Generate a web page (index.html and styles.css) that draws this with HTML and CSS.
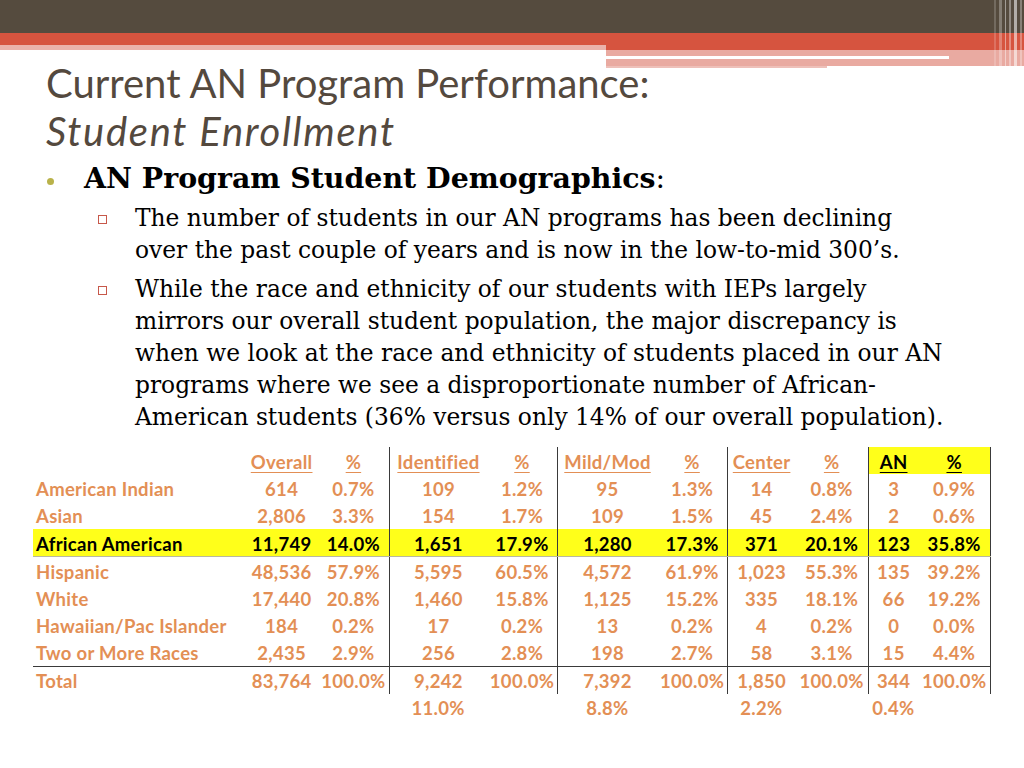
FILE: index.html
```html
<!DOCTYPE html>
<html lang="en">
<head>
<meta charset="utf-8">
<title>Current AN Program Performance</title>
<link rel="stylesheet" href="styles.css">
</head>
<body>
<div class="slide">
  <header class="banner">
    <div class="band-dark"></div>
    <div class="band-red"></div>
    <div class="band-lower">
      <div class="lower-left"></div>
      <div class="lower-right">
        <div class="lr-red"></div>
        <div class="lr-pink">
          <div class="lr-line"></div>
        </div>
        <div class="lr-tail"></div>
      </div>
    </div>
    <div class="stripes">
      <span class="s1"></span><span class="s2"></span><span class="s3"></span><span class="s4"></span><span class="s5"></span><span class="s6"></span>
    </div>
  </header>

  <h1 class="title">Current AN Program Performance:<br><em>Student Enrollment</em></h1>

  <ul class="bullets">
    <li class="lvl1"><strong>AN Program Student Demographics</strong>:
      <ul class="sub">
        <li>The number of students in our AN programs has been declining<br>over the past couple of years and is now in the low-to-mid 300’s.</li>
        <li>While the race and ethnicity of our students with IEPs largely<br>mirrors our overall student population, the major discrepancy is<br>when we look at the race and ethnicity of students placed in our AN<br>programs where we see a disproportionate number of African-<br>American students (36% versus only 14% of our overall population).</li>
      </ul>
    </li>
  </ul>

  <table class="data">
    <colgroup>
      <col class="c-label"><col class="c-a"><col class="c-b"><col class="c-c"><col class="c-d"><col class="c-e"><col class="c-f"><col class="c-g"><col class="c-h"><col class="c-i"><col class="c-j">
    </colgroup>
    <thead>
      <tr>
        <th class="label"></th>
        <th><u>Overall</u></th><th><u>%</u></th>
        <th class="sep"><u>Identified</u></th><th><u>%</u></th>
        <th class="sep"><u>Mild/Mod</u></th><th><u>%</u></th>
        <th class="sep"><u>Center</u></th><th><u>%</u></th>
        <th class="sep an"><u>AN</u></th><th class="an end"><u>%</u></th>
      </tr>
    </thead>
    <tbody>
      <tr><td class="label">American Indian</td><td>614</td><td>0.7%</td><td class="sep">109</td><td>1.2%</td><td class="sep">95</td><td>1.3%</td><td class="sep">14</td><td>0.8%</td><td class="sep">3</td><td class="end">0.9%</td></tr>
      <tr><td class="label">Asian</td><td>2,806</td><td>3.3%</td><td class="sep">154</td><td>1.7%</td><td class="sep">109</td><td>1.5%</td><td class="sep">45</td><td>2.4%</td><td class="sep">2</td><td class="end">0.6%</td></tr>
      <tr class="hl"><td class="label">African American</td><td>11,749</td><td>14.0%</td><td class="sep">1,651</td><td>17.9%</td><td class="sep">1,280</td><td>17.3%</td><td class="sep">371</td><td>20.1%</td><td class="sep">123</td><td class="end">35.8%</td></tr>
      <tr><td class="label">Hispanic</td><td>48,536</td><td>57.9%</td><td class="sep">5,595</td><td>60.5%</td><td class="sep">4,572</td><td>61.9%</td><td class="sep">1,023</td><td>55.3%</td><td class="sep">135</td><td class="end">39.2%</td></tr>
      <tr><td class="label">White</td><td>17,440</td><td>20.8%</td><td class="sep">1,460</td><td>15.8%</td><td class="sep">1,125</td><td>15.2%</td><td class="sep">335</td><td>18.1%</td><td class="sep">66</td><td class="end">19.2%</td></tr>
      <tr><td class="label">Hawaiian/Pac Islander</td><td>184</td><td>0.2%</td><td class="sep">17</td><td>0.2%</td><td class="sep">13</td><td>0.2%</td><td class="sep">4</td><td>0.2%</td><td class="sep">0</td><td class="end">0.0%</td></tr>
      <tr class="last"><td class="label">Two or More Races</td><td>2,435</td><td>2.9%</td><td class="sep">256</td><td>2.8%</td><td class="sep">198</td><td>2.7%</td><td class="sep">58</td><td>3.1%</td><td class="sep">15</td><td class="end">4.4%</td></tr>
      <tr><td class="label">Total</td><td>83,764</td><td>100.0%</td><td class="sep">9,242</td><td>100.0%</td><td class="sep">7,392</td><td>100.0%</td><td class="sep">1,850</td><td>100.0%</td><td class="sep">344</td><td class="end">100.0%</td></tr>
      <tr class="rates"><td class="label"></td><td></td><td></td><td>11.0%</td><td></td><td>8.8%</td><td></td><td>2.2%</td><td></td><td>0.4%</td><td></td></tr>
    </tbody>
  </table>
</div>
</body>
</html>
```

FILE: styles.css
```css
* { box-sizing: border-box; }
html, body { margin: 0; padding: 0; background: #ffffff; }

.slide {
  position: relative;
  width: 1024px;
  height: 768px;
  overflow: hidden;
  background: #ffffff;
}

/* ---------- banner ---------- */
.banner { position: relative; height: 68px; }
.band-dark { height: 33px; background: #554b3e; }
.band-red { height: 12px; background: #d6543f; }
.band-lower { display: flex; height: 23px; }
.lower-left { width: 606px; height: 5px; background: #eab2aa; }
.lower-right { flex: 1; display: flex; flex-direction: column; }
.lr-red { height: 5px; background: #d6543f; }
.lr-pink { height: 16px; background: #e9aaa1; padding-top: 6px; }
.lr-line { width: 343px; height: 3px; background: #ffffff; }
.lr-tail { height: 2px; width: 221px; background: #eec0b9; }

.stripes {
  position: absolute;
  top: 0; right: 0;
  width: 34px; height: 68px;
  display: flex;
  justify-content: flex-end;
  gap: 3px;
  padding-right: 2px;
}
.stripes span { display: block; height: 100%; background: rgba(255,255,255,0.35); }
.stripes .s1 { width: 2px; background: rgba(255,255,255,0.18); }
.stripes .s2 { width: 3px; background: rgba(255,255,255,0.28); }
.stripes .s3 { width: 1px; background: rgba(255,255,255,0.45); }
.stripes .s4 { width: 2px; background: rgba(255,255,255,0.35); }
.stripes .s5 { width: 3px; background: rgba(255,255,255,0.55); }
.stripes .s6 { width: 2px; background: rgba(255,255,255,0.3); }

/* ---------- title ---------- */
.title {
  margin: -9px 0 0 46px;
  font-family: "Lato", "Open Sans", sans-serif;
  font-weight: 400;
  font-size: 40px;
  line-height: 48px;
  color: #54493e;
}
.title em { font-style: italic; letter-spacing: 1.7px; }

/* ---------- bullets ---------- */
.bullets {
  list-style: none;
  margin: 7px 0 0 0;
  padding: 0 0 0 84px;
  font-family: "DejaVu Serif", "Liberation Serif", serif;
  color: #000000;
}
.lvl1 {
  position: relative;
  font-size: 28.4px;
  line-height: 32px;
}
.lvl1::before {
  content: "";
  position: absolute;
  left: -37px; top: 16px;
  width: 7px; height: 7px;
  border-radius: 50%;
  background: #b9b24a;
}
.sub {
  list-style: none;
  margin: 7px 0 0 0;
  padding: 0 0 0 51px;
}
.sub li {
  position: relative;
  font-size: 23.35px;
  line-height: 32px;
  margin-bottom: 7px;
  white-space: nowrap;
}
.sub li::before {
  content: "";
  position: absolute;
  left: -37px; top: 13px;
  width: 7px; height: 7px;
  border: 1px solid #c7584a;
}

/* ---------- table ---------- */
.data {
  position: absolute;
  left: 33px;
  top: 447px;
  border-collapse: collapse;
  table-layout: fixed;
  width: 958px;
  font-family: "Lato", "Open Sans", sans-serif;
  font-weight: 700;
  font-size: 18.5px;
  letter-spacing: 0.3px;
  color: #e38f55;
}
.c-label { width: 212px; }
.c-a { width: 73px; }
.c-b { width: 71px; }
.c-c { width: 98px; }
.c-d { width: 70px; }
.c-e { width: 100px; }
.c-f { width: 70px; }
.c-g { width: 68px; }
.c-h { width: 73px; }
.c-i { width: 50px; }
.c-j { width: 72px; }

.data th, .data td {
  height: 27.4px;
  padding: 2px 0 0 0;
  text-align: center;
  white-space: nowrap;
  font-weight: 700;
}
.data .label { text-align: left; padding-left: 3px; }
.data u { text-decoration-thickness: 1px; text-underline-offset: 3px; }
.data .sep { border-left: 1px solid #3a3a3a; }
.data .end { border-right: 1px solid #3a3a3a; }
.data th.an { background: #ffff1a; color: #000000; }
.data tr.hl td { background: #ffff1a; color: #000000; border-bottom: 1px solid #b8b8a0; }
.data tr.last td { border-bottom: 1px solid #3a3a3a; }
.data tr.rates td { border: none; }
```
